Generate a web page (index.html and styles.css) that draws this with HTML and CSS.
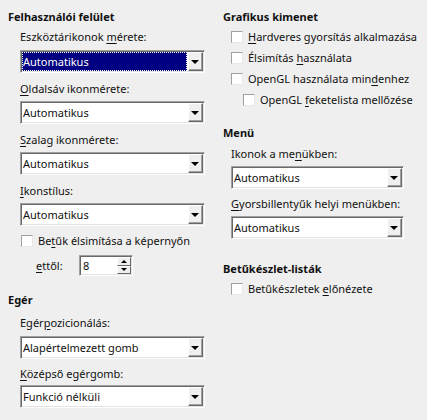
FILE: index.html
```html
<!DOCTYPE html>
<html>
<head>
<meta charset="utf-8">
<link rel="stylesheet" href="styles.css">
</head>
<body>
<div class="page">
  <div class="col left">
    <div class="heading">Felhasználói felület</div>
    <div class="indent">
      <div class="label">Eszköztárikonok <u>m</u>érete:</div>
      <div class="combo focus"><div class="combo-text"><span class="sel">Automatikus</span></div><div class="combo-btn"><span class="tri"></span></div></div>
      <div class="label"><u>O</u>ldalsáv ikonmérete:</div>
      <div class="combo"><div class="combo-text">Automatikus</div><div class="combo-btn"><span class="tri"></span></div></div>
      <div class="label"><u>S</u>zalag ikonmérete:</div>
      <div class="combo"><div class="combo-text">Automatikus</div><div class="combo-btn"><span class="tri"></span></div></div>
      <div class="label"><u>I</u>konstílus:</div>
      <div class="combo"><div class="combo-text">Automatikus</div><div class="combo-btn"><span class="tri"></span></div></div>
      <div class="check-row aa"><span class="box"></span><span>Be<u>t</u>űk élsimítása a képernyőn</span></div>
      <div class="spin-row">
        <span class="spin-label"><u>e</u>ttől:</span>
        <div class="spin"><div class="spin-text">8</div><div class="spin-btns"><div class="spin-btn"><span class="tri up"></span></div><div class="spin-btn"><span class="tri"></span></div></div></div>
      </div>
    </div>
    <div class="heading h-egér">Egér</div>
    <div class="indent egér">
      <div class="label">Egér<u>p</u>ozicionálás:</div>
      <div class="combo"><div class="combo-text">Alapértelmezett gomb</div><div class="combo-btn"><span class="tri"></span></div></div>
      <div class="label"><u>K</u>özépső egérgomb:</div>
      <div class="combo"><div class="combo-text">Funkció nélküli</div><div class="combo-btn"><span class="tri"></span></div></div>
    </div>
  </div>
  <div class="col right">
    <div class="heading">Grafikus kimenet</div>
    <div class="indent">
      <div class="check-row"><span class="box"></span><span><u>H</u>ardveres gyorsítás alkalmazása</span></div>
      <div class="check-row"><span class="box"></span><span>Élsimítás <u>h</u>asználata</span></div>
      <div class="check-row"><span class="box"></span><span>OpenGL használata min<u>d</u>enhez</span></div>
      <div class="check-row sub"><span class="box"></span><span>OpenGL <u>f</u>eketelista mellőzése</span></div>
    </div>
    <div class="heading h-menu">Menü</div>
    <div class="indent menu">
      <div class="label">Ikonok a me<u>n</u>ükben:</div>
      <div class="combo"><div class="combo-text">Automatikus</div><div class="combo-btn"><span class="tri"></span></div></div>
      <div class="label"><u>G</u>yorsbillentyűk helyi menükben:</div>
      <div class="combo"><div class="combo-text">Automatikus</div><div class="combo-btn"><span class="tri"></span></div></div>
    </div>
    <div class="heading h-font">Betűkészlet-listák</div>
    <div class="indent">
      <div class="check-row"><span class="box"></span><span>Betűkészletek <u>e</u>lőnézete</span></div>
    </div>
  </div>
</div>
</body>
</html>
```

FILE: styles.css
```css
html, body {
  margin: 0;
  padding: 0;
}
body {
  background: #efefef;
  font-family: "Noto Sans", "DejaVu Sans", sans-serif;
  font-size: 11px;
  color: #111;
  width: 427px;
  height: 420px;
  overflow: hidden;
}
u {
  text-decoration: underline;
  text-underline-offset: 2px;
}
.page {
  display: flex;
  padding: 9px 0 0 8px;
}
.col {
  display: flex;
  flex-direction: column;
}
.left {
  width: 215px;
}
.right {
  width: 196px;
}
.heading {
  font-weight: bold;
  line-height: 16px;
  height: 16px;
  white-space: nowrap;
}
.indent {
  display: flex;
  flex-direction: column;
  padding-left: 12px;
}
.left .indent {
  padding-right: 18px;
}
.right .indent {
  padding-left: 8px;
  padding-right: 15px;
}
.label {
  line-height: 16px;
  height: 16px;
  margin-top: 4px;
  margin-bottom: 5px;
  white-space: nowrap;
}
.combo + .label {
  margin-top: 8px;
  margin-bottom: 4px;
}
.combo {
  display: flex;
  height: 19px;
  background: #fff;
  border: 1px solid;
  border-color: #a0a0a0 #fff #fff #a0a0a0;
  box-shadow: inset 1px 1px 0 #696969, inset -1px -1px 0 #e3e3e3;
  padding: 1px;
  box-sizing: content-box;
}
.combo-text {
  flex: 1;
  display: flex;
  align-items: center;
  padding-left: 1px;
  white-space: nowrap;
  line-height: 17px;
}
.focus .combo-text {
  background: #000080;
  color: #fff;
  outline: 1px dotted #fff;
  outline-offset: -1px;
  border: 1px dotted #000;
  margin-right: 1px;
  padding-left: 0;
}
.combo-btn {
  width: 15px;
  background: #efefef;
  box-sizing: border-box;
  border: 1px solid;
  border-color: #fff #696969 #696969 #fff;
  box-shadow: inset -1px -1px 0 #a0a0a0;
  display: flex;
  align-items: center;
  justify-content: center;
}
.tri {
  width: 0;
  height: 0;
  border-left: 4px solid transparent;
  border-right: 4px solid transparent;
  border-top: 4px solid #000;
  margin-right: 1px;
}
.tri.up {
  border-top: 0;
  border-bottom: 4px solid #000;
}
.check-row {
  display: flex;
  align-items: center;
  gap: 5px;
  height: 16px;
  line-height: 16px;
  white-space: nowrap;
}
.box {
  width: 10px;
  height: 10px;
  background: #fff;
  border: 1px solid;
  border-color: #a0a0a0 #e8e8e8 #e8e8e8 #a0a0a0;
  flex: none;
}
.aa {
  margin-top: 7px;
  margin-left: 1px;
}
.spin-row {
  display: flex;
  align-items: center;
  margin-top: 6px;
  padding-left: 16px;
  height: 21px;
}
.spin-label {
  width: 43px;
}
.spin {
  display: flex;
  width: 50px;
  height: 17px;
  background: #fff;
  border: 1px solid;
  border-color: #a0a0a0 #fff #fff #a0a0a0;
  box-shadow: inset 1px 1px 0 #696969, inset -1px -1px 0 #e3e3e3;
  padding: 1px;
  box-sizing: content-box;
}
.spin-text {
  flex: 1;
  padding-left: 2px;
  line-height: 17px;
}
.spin-btns {
  display: flex;
  flex-direction: column;
  width: 14px;
}
.spin-btn {
  flex: 1;
  background: #efefef;
  box-sizing: border-box;
  border: 1px solid;
  border-color: #fff #696969 #696969 #fff;
  display: flex;
  align-items: center;
  justify-content: center;
}
.spin-btn .tri {
  border-left-width: 3px;
  border-right-width: 3px;
  border-top-width: 3px;
}
.spin-btn .tri.up {
  border-bottom-width: 3px;
}
.h-egér {
  margin-top: 16px;
}
.indent.egér .label:first-child {
  margin-top: 7px;
}
.indent.egér .combo + .label {
  margin-top: 7px;
  margin-bottom: 3px;
}
.right .indent .check-row {
  margin-top: 5px;
  margin-left: 0;
}
.right .indent .check-row:first-child {
  margin-top: 4px;
}
.check-row.sub {
  margin-left: 12px !important;
}
.h-menu {
  margin-top: 17px;
}
.indent.menu .label {
  margin-bottom: 4px;
}
.indent.menu .label:first-child {
  margin-top: 5px;
}
.indent.menu .combo + .label {
  margin-top: 7px;
}
.h-font {
  margin-top: 22px;
}
```
